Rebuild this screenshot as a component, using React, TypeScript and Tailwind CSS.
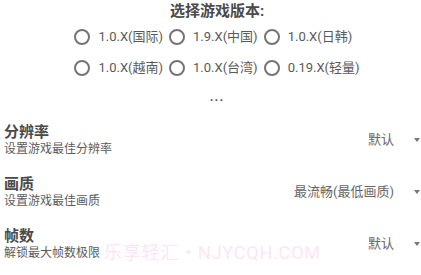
const versions = [
  ['1.0.X(国际)', '1.9.X(中国)', '1.0.X(日韩)'],
  ['1.0.X(越南)', '1.0.X(台湾)', '0.19.X(轻量)'],
]

const settings = [
  { title: '分辨率', desc: '设置游戏最佳分辨率', value: '默认' },
  { title: '画质', desc: '设置游戏最佳画质', value: '最流畅(最低画质)' },
  { title: '帧数', desc: '解锁最大帧数极限', value: '默认' },
]

function Radio({ label }: { label: string }) {
  return (
    <div className="flex items-center">
      <span className="w-[16px] h-[16px] rounded-full border-2 border-[#747474]"></span>
      <span className="ml-[8px] text-[13px] text-[#5a5a5a]">{label}</span>
    </div>
  )
}

export default function App() {
  return (
    <div
      className="relative w-[421px] h-[275px] bg-white overflow-hidden"
      style={{ fontFamily: 'Roboto, "Noto Sans CJK SC", sans-serif' }}
    >
      <section className="flex flex-col items-center pl-[13px]">
        <h1 className="mt-[1px] text-[15px] font-bold text-[#4a4a4a] leading-[20px]">选择游戏版本:</h1>
        <div className="mt-[6px] flex flex-col gap-[11px]">
          {versions.map((row, i) => (
            <div key={i} className="flex items-center gap-[6px] h-[20px]">
              {row.map(v => (
                <Radio key={v} label={v} />
              ))}
            </div>
          ))}
        </div>
        <div className="mt-[9px] text-[13px] font-bold text-[#555] leading-[20px] tracking-[1px]">...</div>
      </section>

      <ul className="mt-[16px] flex flex-col gap-[18px]">
        {settings.map(s => (
          <li key={s.title} className="flex items-center pl-[4px] pr-[1px]">
            <div className="flex-1">
              <p className="text-[15px] font-bold text-[#4a4a4a] leading-[18px]">{s.title}</p>
              <p className="mt-[1px] text-[12px] text-[#5c5c5c] leading-[15px]">{s.desc}</p>
            </div>
            <span className="text-[13px] text-[#666]">{s.value}</span>
            <svg className="ml-[20px]" width="6" height="4" viewBox="0 0 6 4">
              <path d="M0 0H6L3 4Z" fill="#777" />
            </svg>
          </li>
        ))}
      </ul>

      <div className="absolute left-[104px] top-[239px] text-[18px] text-[#fce6f6] tracking-[0.8px] pointer-events-none">
        乐享轻汇・NJYCQH.COM
      </div>
    </div>
  )
}
